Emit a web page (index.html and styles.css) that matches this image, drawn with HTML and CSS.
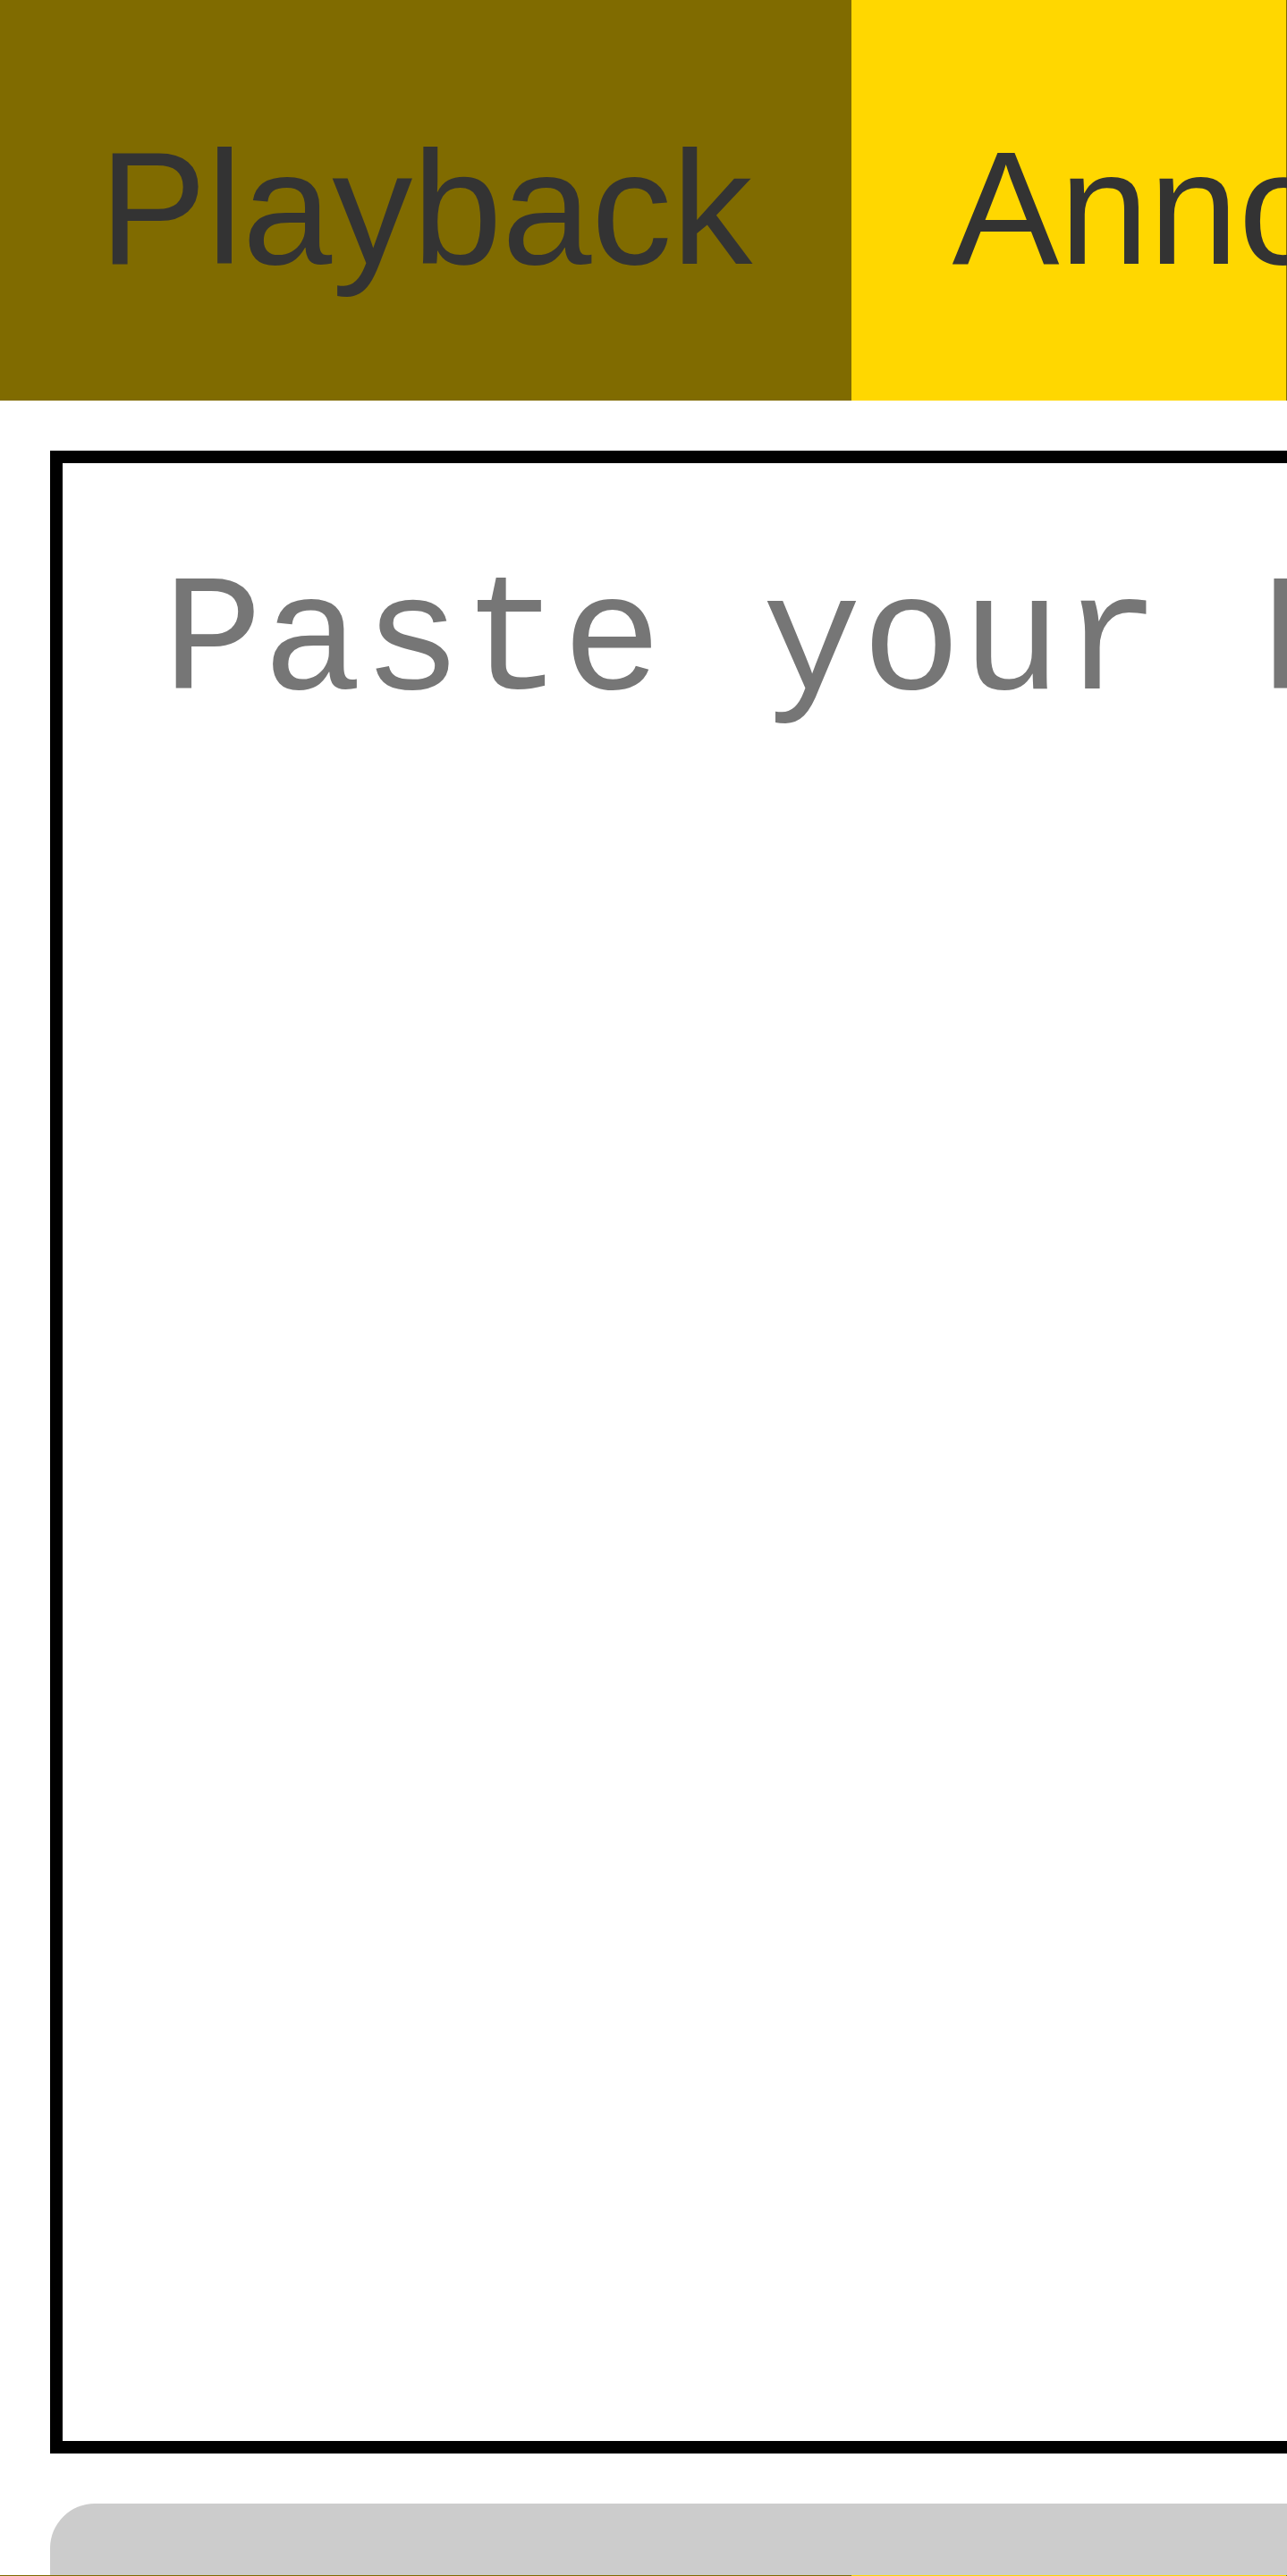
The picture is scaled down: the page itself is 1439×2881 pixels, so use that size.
FILE: index.html
```html
<!DOCTYPE html>
<html lang="en">
<head>
<meta charset="utf-8">
<title>PGN Viewer</title>
<link rel="stylesheet" href="styles.css">
</head>
<body>
<div class="app">
  <nav class="tabs">
    <div class="tab tab-inactive">Playback</div>
    <div class="tab tab-active">Annotate</div>
  </nav>
  <main class="panel">
    <textarea class="pgn-input" placeholder="Paste your PGN here"></textarea>
    <div class="actions"><div class="action-bar"></div></div>
  </main>
  <nav class="tabs">
    <div class="tab tab-inactive">Playback</div>
    <div class="tab tab-active">Annotate</div>
  </nav>
</div>
</body>
</html>
```
FILE: styles.css
```css
html, body {
  margin: 0;
  padding: 0;
  overflow-x: hidden;
  background: #ffffff;
}

.app {
  width: 1439px;
  font-family: "Liberation Sans", Arial, sans-serif;
}

.tabs {
  display: flex;
  height: 448px;
  background: #806b00;
  overflow: visible;
}

.tab {
  box-sizing: border-box;
  height: 448px;
  padding: 129px 111px 0 111px;
  font-size: 180px;
  line-height: 207px;
  color: #333333;
  white-space: nowrap;
  flex: none;
}

.tab-inactive {
  background: #806b00;
}

.tab-active {
  background: #ffd700;
  width: 486px;
  padding-left: 112px;
}

.panel {
  padding: 56px 0 0 56px;
}

.pgn-input {
  display: block;
  box-sizing: border-box;
  width: 2600px;
  height: 2240px;
  margin: 0;
  border: 14px solid #000000;
  padding: 97px 112px;
  font-family: "Liberation Mono", "Courier New", monospace;
  font-size: 186px;
  color: #333333;
  background: #ffffff;
  resize: none;
  outline: none;
}

.pgn-input::placeholder {
  color: #767676;
  opacity: 1;
}

.actions {
  padding-top: 56px;
}

.action-bar {
  width: 2600px;
  height: 80px;
  background: #cccccc;
  border-top-left-radius: 50px;
}
```
